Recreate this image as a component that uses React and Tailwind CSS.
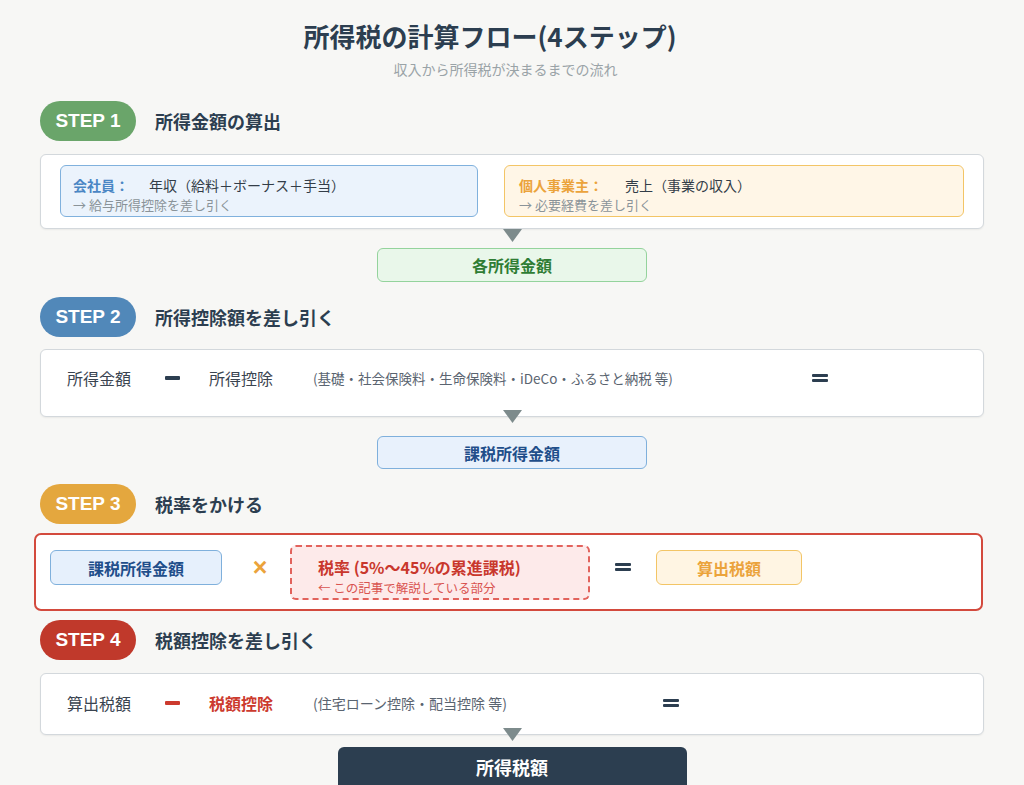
import React from "react";

function Arrow({ className }) {
  return (
    <div className={"flex justify-center relative z-10 " + className}>
      <svg width="19" height="13" viewBox="0 0 19 13">
        <path d="M0 0H19L9.5 13Z" fill="#7d8b8c" />
      </svg>
    </div>
  );
}

function StepHeader({ n, title, pill, className }) {
  return (
    <div className={"flex items-center pl-[40px] " + className}>
      <div
        className={
          "w-[96px] h-[40px] rounded-full flex items-center justify-center text-white text-[19px] font-bold font-['Liberation_Sans',Arial,sans-serif] " +
          pill
        }
      >
        STEP {n}
      </div>
      <div className="ml-[19px] text-[18px] leading-[26px] font-bold text-[#2c3e50]">{title}</div>
    </div>
  );
}

function Equals() {
  return (
    <div className="flex flex-col gap-[2px] w-[16px]">
      <div className="h-[3px] bg-[#2c3e50] rounded-[1px]" />
      <div className="h-[3px] bg-[#2c3e50] rounded-[1px]" />
    </div>
  );
}

export default function App() {
  return (
    <div className="w-[1024px] h-[785px] overflow-hidden bg-[#f7f7f5] text-[#2c3e50] font-['Noto_Sans_CJK_JP','Noto_Sans',sans-serif]">
      <div className="pt-[19px] flex flex-col items-center">
        <h1 className="mr-[44px] text-[26px] leading-[34px] font-bold text-[#2c3e50]">
          所得税の計算フロー(4ステップ)
        </h1>
        <p className="mt-[6px] mr-[13px] text-[14px] leading-[20px] text-[#9aa3a7]">
          収入から所得税が決まるまでの流れ
        </p>
      </div>

      {/* STEP 1 */}
      <StepHeader n="1" title="所得金額の算出" pill="bg-[#6aa56a]" className="mt-[22px]" />
      <div className="mt-[13px] mx-[40px] h-[75px] rounded-[6px] border border-[#d3d8dc] bg-white shadow-[0_1px_2px_rgba(0,0,0,0.06)] flex gap-[26px] px-[19px] pt-[10px]">
        <div className="w-[418px] h-[52px] rounded-[6px] border border-[#80b1dd] bg-[#ebf3fc] pl-[12px] pt-[9px]">
          <div className="flex items-center text-[14px] leading-[20px]">
            <span className="w-[76px] font-bold text-[#4a86c4]">会社員：</span>
            <span className="text-[#333d48]">年収（給料＋ボーナス＋手当）</span>
          </div>
          <div className="mt-[2px] text-[13px] leading-[16px] text-[#8a9399]">→ 給与所得控除を差し引く</div>
        </div>
        <div className="flex-1 h-[52px] rounded-[6px] border border-[#f3c566] bg-[#fff6e7] pl-[14px] pt-[9px]">
          <div className="flex items-center text-[14px] leading-[20px]">
            <span className="w-[106px] font-bold text-[#eba33b]">個人事業主：</span>
            <span className="text-[#333d48]">売上（事業の収入）</span>
          </div>
          <div className="mt-[2px] text-[13px] leading-[16px] text-[#8a9399]">→ 必要経費を差し引く</div>
        </div>
      </div>
      <Arrow className="" />
      <div className="mt-[6px] mx-auto w-[270px] h-[34px] rounded-[6px] border border-[#94d39c] bg-[#e9f7ea] flex items-center justify-center text-[16px] font-bold text-[#2f7d34]">
        各所得金額
      </div>

      {/* STEP 2 */}
      <StepHeader n="2" title="所得控除額を差し引く" pill="bg-[#5188b9]" className="mt-[15px]" />
      <div className="mt-[12px] mx-[40px] h-[68px] rounded-[6px] border border-[#d3d8dc] bg-white shadow-[0_1px_2px_rgba(0,0,0,0.06)] pl-[26px] pt-[17px]">
        <div className="flex items-center h-[22px]">
          <span className="w-[96px] text-[16px] leading-[22px] text-[#3a4450]">所得金額</span>
          <span className="w-[46px] flex">
            <span className="ml-[2px] w-[15px] h-[4px] bg-[#2c3e50] rounded-[1px]" />
          </span>
          <span className="w-[104px] text-[16px] leading-[22px] text-[#3a4450]">所得控除</span>
          <span className="w-[499px] text-[13.5px] leading-[22px] text-[#5a6470]">
            (基礎・社会保険料・生命保険料・iDeCo・ふるさと納税 等)
          </span>
          <Equals />
        </div>
      </div>
      <Arrow className="-mt-[7px]" />
      <div className="mt-[13px] mx-auto w-[270px] h-[33px] rounded-[6px] border border-[#7fb0dc] bg-[#e8f1fc] flex items-center justify-center text-[16px] font-bold text-[#1f4e8a]">
        課税所得金額
      </div>

      {/* STEP 3 */}
      <StepHeader n="3" title="税率をかける" pill="bg-[#e4a73e]" className="mt-[15px]" />
      <div className="mt-[9px] ml-[34px] mr-[41px] h-[78px] rounded-[7px] border-2 border-[#d34a3d] bg-white flex items-start pl-[14px] pt-[10px]">
        <div className="mt-[5px] w-[172px] h-[35px] rounded-[6px] border border-[#7fb0dc] bg-[#e6f0fc] flex items-center justify-center text-[16px] font-bold text-[#1f4e8a]">
          課税所得金額
        </div>
        <div className="w-[68px] h-[45px] flex items-center justify-center pl-[8px] text-[25px] leading-[25px] font-bold text-[#eba33b] font-['Liberation_Sans',Arial,sans-serif]">
          ×
        </div>
        <div className="w-[300px] h-[55px] rounded-[6px] border-2 border-dashed border-[#e2625c] bg-[#fdeaea] pl-[26px] pt-[9px]">
          <div className="text-[16px] leading-[22px] font-bold text-[#c9372c]">税率 (5%〜45%の累進課税)</div>
          <div className="mt-[2px] text-[12.5px] leading-[16px] text-[#d9534f]">← この記事で解説している部分</div>
        </div>
        <div className="w-[66px] h-[43px] flex items-center justify-center">
          <Equals />
        </div>
        <div className="mt-[5px] w-[146px] h-[35px] rounded-[6px] border border-[#f3c566] bg-[#fff5e3] flex items-center justify-center text-[16px] font-bold text-[#eba33b]">
          算出税額
        </div>
      </div>

      {/* STEP 4 */}
      <StepHeader n="4" title="税額控除を差し引く" pill="bg-[#c0392b]" className="mt-[9px]" />
      <div className="mt-[13px] mx-[40px] h-[62px] rounded-[6px] border border-[#d3d8dc] bg-white shadow-[0_1px_2px_rgba(0,0,0,0.06)] pl-[26px] pt-[18px]">
        <div className="flex items-center h-[22px]">
          <span className="w-[96px] text-[16px] leading-[22px] text-[#3a4450]">算出税額</span>
          <span className="w-[46px] flex">
            <span className="ml-[2px] w-[15px] h-[4px] bg-[#cc3a2e] rounded-[1px]" />
          </span>
          <span className="w-[104px] text-[16px] leading-[22px] font-bold text-[#cc3a2e]">税額控除</span>
          <span className="w-[350px] text-[14px] leading-[22px] text-[#5a6470]">
            (住宅ローン控除・配当控除 等)
          </span>
          <Equals />
        </div>
      </div>
      <Arrow className="-mt-[7px]" />
      <div className="mt-[6px] mx-auto w-[349px] h-[44px] rounded-[6px] bg-[#2c3e50] flex justify-center pt-[8px]">
        <span className="text-[18px] leading-[24px] font-bold text-white">所得税額</span>
      </div>
    </div>
  );
}
